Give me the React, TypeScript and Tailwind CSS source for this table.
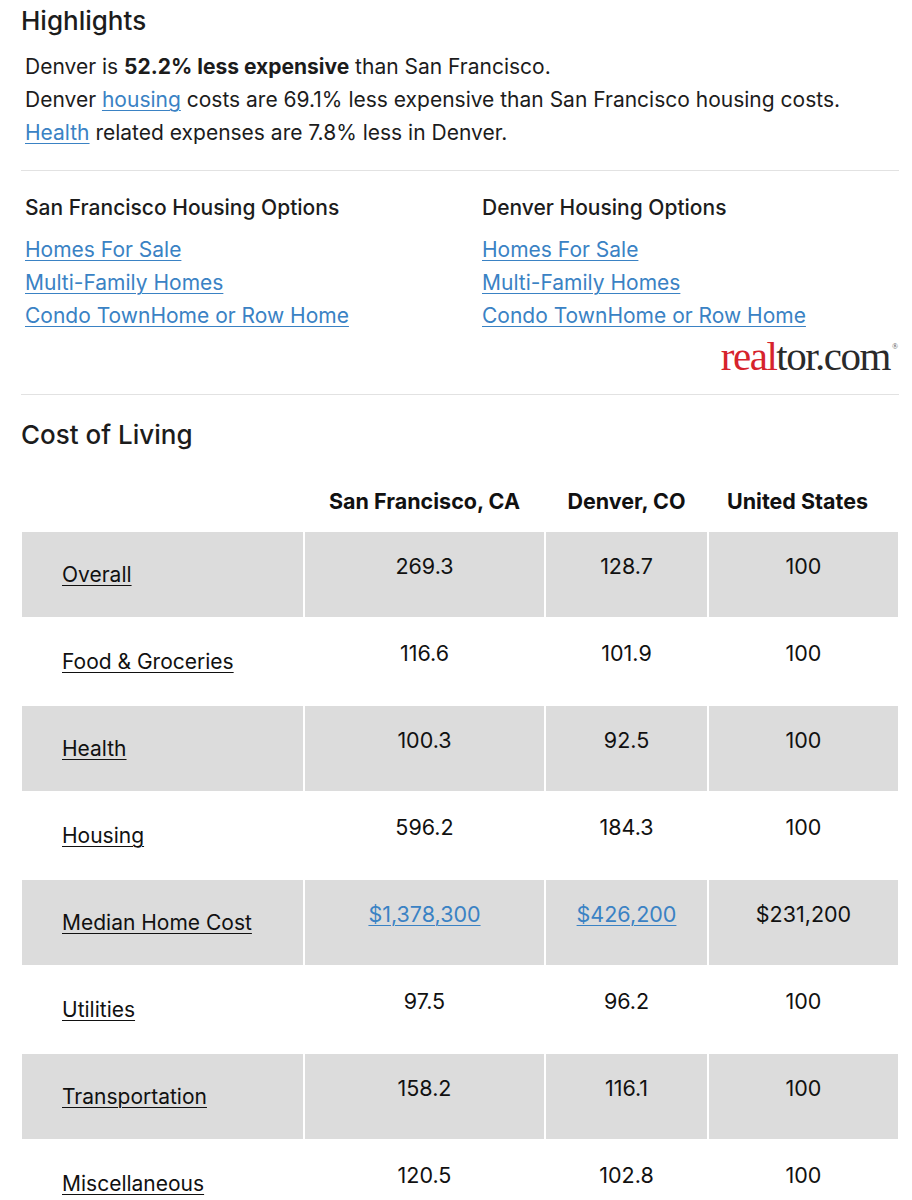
import React from 'react';

const font = { fontFamily: 'Inter, "Liberation Sans", sans-serif' };

const rows = [
  { label: 'Overall', sf: '269.3', den: '128.7', us: '100' },
  { label: 'Food & Groceries', sf: '116.6', den: '101.9', us: '100' },
  { label: 'Health', sf: '100.3', den: '92.5', us: '100' },
  { label: 'Housing', sf: '596.2', den: '184.3', us: '100' },
  { label: 'Median Home Cost', sf: '$1,378,300', den: '$426,200', us: '$231,200', links: true },
  { label: 'Utilities', sf: '97.5', den: '96.2', us: '100' },
  { label: 'Transportation', sf: '158.2', den: '116.1', us: '100' },
  { label: 'Miscellaneous', sf: '120.5', den: '102.8', us: '100' },
];

const link = 'text-[#3a82c4] underline underline-offset-[3px] decoration-1';

function HousingColumn({ city }: { city: string }) {
  return (
    <div className="flex-1">
      <h3 className="text-[21px] leading-[30px] font-medium text-[#1c1c1c]">{city} Housing Options</h3>
      <div className="mt-[10px] flex flex-col items-start text-[21px] leading-[33px]">
        <a href="#" className={link}>Homes For Sale</a>
        <a href="#" className={link}>Multi-Family Homes</a>
        <a href="#" className={link}>Condo TownHome or Row Home</a>
      </div>
    </div>
  );
}

export default function App() {
  return (
    <div className="min-h-[1200px] bg-white text-[#1c1c1c] pl-[20px] pr-[12px] pt-[5px]" style={font}>
      <h2 className="text-[26px] leading-[32px] font-medium pl-px">Highlights</h2>

      <div className="mt-[13px] pl-[5px] text-[21px] leading-[33px]">
        <p>
          Denver is <span className="font-bold">52.2% less expensive</span> than San Francisco.
        </p>
        <p>
          Denver <a href="#" className={link}>housing</a> costs are 69.1% less expensive than San Francisco housing costs.
        </p>
        <p>
          <a href="#" className={link}>Health</a> related expenses are 7.8% less in Denver.
        </p>
      </div>

      <hr className="mt-[21px] border-t border-[#e2e2e2] mx-px" />

      <div className="mt-[22px] pl-[5px] flex">
        <div className="w-[457px]">
          <HousingColumn city="San Francisco" />
        </div>
        <HousingColumn city="Denver" />
      </div>

      <div className="flex justify-end pr-[2px] mt-[1px]">
        <div
          className="text-[41px] leading-[46px] tracking-[-1.5px] flex items-start"
          style={{ fontFamily: '"Liberation Serif", "DejaVu Serif", serif' }}
        >
          <span className="text-[#d6232c]">real</span>
          <span className="text-[#2a2a2a]">tor.com</span>
          <span className="text-[8px] leading-[10px] text-[#555] mt-[9px] ml-[2px] tracking-normal">®</span>
        </div>
      </div>

      <hr className="mt-[15px] border-t border-[#e2e2e2] mx-px" />

      <h2 className="mt-[24px] text-[26px] leading-[32px] font-medium pl-px">Cost of Living</h2>

      <table className="mt-[18px] w-[880px] border-separate border-spacing-[2px] text-[21.5px] leading-[24px] text-[#111]">
        <colgroup>
          <col className="w-[281px]" />
          <col className="w-[239px]" />
          <col className="w-[161px]" />
          <col className="w-[189px]" />
        </colgroup>
        <thead>
          <tr>
            <th className="h-[59px]"></th>
            <th className="h-[59px] font-bold text-center align-middle">San Francisco, CA</th>
            <th className="h-[59px] font-bold text-center align-middle">Denver, CO</th>
            <th className="h-[59px] font-bold text-center align-middle pr-[12px]">United States</th>
          </tr>
        </thead>
        <tbody>
          {rows.map((r, i) => {
            const bg = i % 2 === 0 ? 'bg-[#dcdcdc]' : 'bg-white';
            return (
              <tr key={r.label}>
                <td className={`${bg} h-[85px] align-top pt-[31px] pl-[40px] text-[21px]`}>
                  <a href="#" className="underline underline-offset-[3px] decoration-1 text-[#111]">{r.label}</a>
                </td>
                <td className={`${bg} h-[85px] align-top pt-[22px] text-center`}>
                  {r.links ? <a href="#" className={link}>{r.sf}</a> : r.sf}
                </td>
                <td className={`${bg} h-[85px] align-top pt-[22px] text-center`}>
                  {r.links ? <a href="#" className={link}>{r.den}</a> : r.den}
                </td>
                <td className={`${bg} h-[85px] align-top pt-[22px] text-center`}>{r.us}</td>
              </tr>
            );
          })}
        </tbody>
      </table>
    </div>
  );
}
